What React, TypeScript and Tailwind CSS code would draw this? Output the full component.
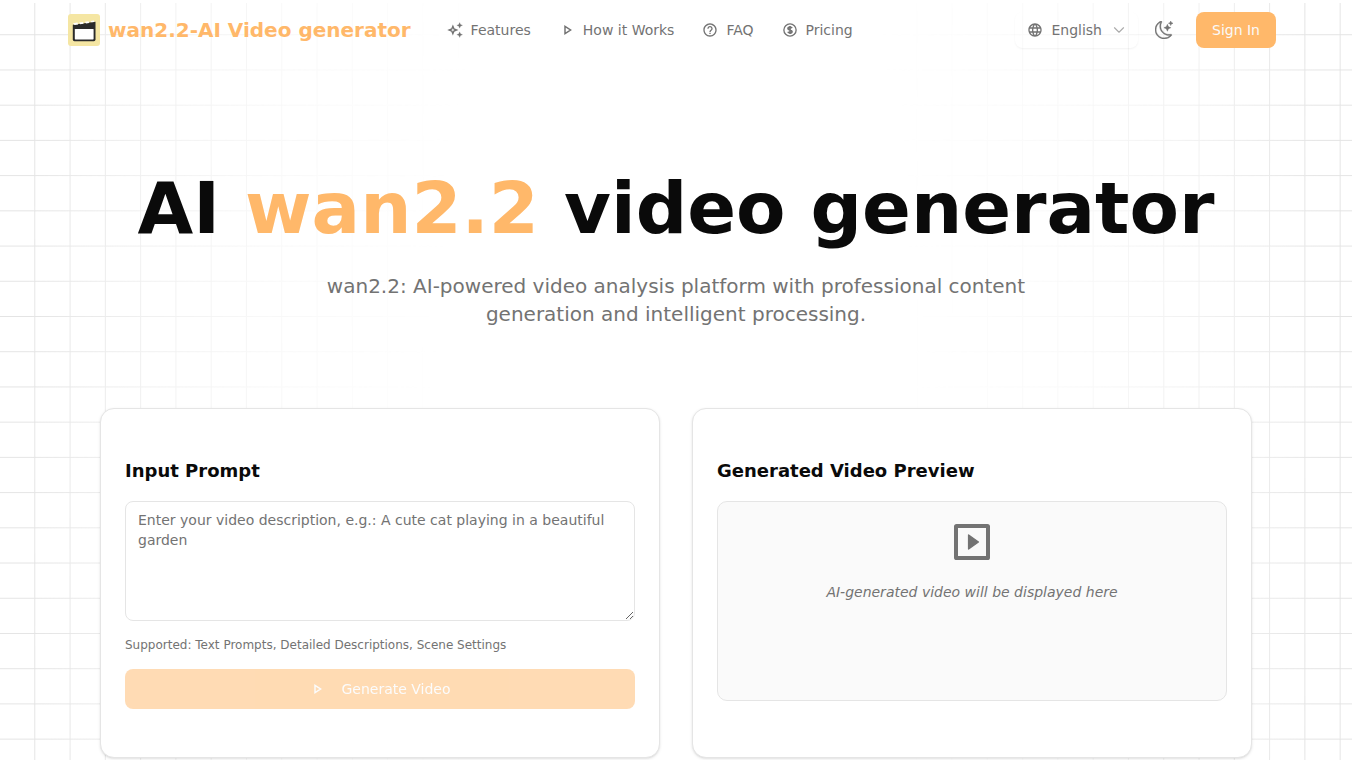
import type { ReactNode } from "react";
import { MdLanguage, MdHelpOutline } from "react-icons/md";
import { BsMoonStars } from "react-icons/bs";
import { ChevronDown } from "lucide-react";

function GridBackdrop() {
  return (
    <svg
      aria-hidden="true"
      className="pointer-events-none absolute inset-0 h-full w-full [mask-image:radial-gradient(ellipse_50%_250%_at_50%_50%,transparent_35%,rgba(0,0,0,0.25)_60%,rgba(0,0,0,0.55)_79%,black_96%)]"
    >
      <defs>
        <pattern id="grid" width="35.28" height="35.22" patternUnits="userSpaceOnUse">
          <path d="M34.78 0V35.22M0 34.72H35.28" fill="none" stroke="#e4e4e4" strokeWidth="1" />
        </pattern>
      </defs>
      <rect y="3" width="100%" height="100%" fill="url(#grid)" />
    </svg>
  );
}

function Logo() {
  return (
    <svg viewBox="0 0 32 32" className="size-8" aria-hidden="true">
      <rect width="32" height="32" rx="3" fill="#f5e6a3" />
      <path
        d="M4.8 10.8 L27.5 7.8 V25.6 a1.6 1.6 0 0 1 -1.6 1.6 H6.4 A1.6 1.6 0 0 1 4.8 25.6 Z"
        fill="#2b2b2b"
      />
      <path
        d="M5 9.2 l4.4 -.6 .8 1.9 -3.6 .6z M11.2 8.4 l3.8 -.5 .6 1.9 -3.4 .4z M17 7.7 l3.6 -.5 .5 1.8 -3.1 .4z M22.6 6.9 l3.4 -.4 .3 1.4 -2.8 .4z"
        fill="#fff"
      />
      <rect x="6.8" y="15" width="18.8" height="10.4" rx=".6" fill="#fff" />
    </svg>
  );
}

function SparkleIcon() {
  return (
    <svg viewBox="0 0 24 24" className="size-4" fill="currentColor" aria-hidden="true">
      <path
        d="M8.8 6.5 L10.4 10.4 14.3 12 10.4 13.6 8.8 17.5 7.2 13.6 3.3 12 7.2 10.4Z"
        fill="none"
        stroke="currentColor"
        strokeWidth="2.2"
        strokeLinejoin="miter"
      />
      <path
        d="M19 .8l1.3 3 3 1.2-3 1.3-1.3 3-1.3-3-3-1.3 3-1.2zM19 14.7l1.3 3 3 1.3-3 1.3-1.3 3-1.3-3-3-1.3 3-1.3z"
        stroke="currentColor"
        strokeWidth=".3"
      />
    </svg>
  );
}

function PlayIcon() {
  return (
    <svg viewBox="0 0 24 24" className="size-4" fill="none" aria-hidden="true">
      <path d="M9 6.6v10.8L17.4 12z" stroke="currentColor" strokeWidth="2.2" />
    </svg>
  );
}

function PriceIcon() {
  return (
    <svg viewBox="0 0 24 24" className="size-4" fill="none" stroke="currentColor" aria-hidden="true">
      <circle cx="12" cy="12" r="9.2" strokeWidth="2" />
      <path
        d="M15 9.2C14.5 8 13.4 7.5 12 7.5c-1.8 0-3 .9-3 2.2 0 1.500 1.300 2 3 2.300 1.800.4 3 .9 3 2.300 0 1.400-1.200 2.200-3 2.200-1.500 0-2.600-.6-3.100-1.900M12 6v12"
        strokeWidth="2.600"
      />
    </svg>
  );
}

function SlideIcon() {
  return (
    <svg viewBox="0 0 24 24" className="size-12" fill="none" stroke="currentColor" aria-hidden="true">
      <rect x="4" y="4" width="16" height="16" rx=".3" strokeWidth="2" strokeLinejoin="round" />
      <path
        d="M10.3 8.5v7l4.9-3.5z"
        fill="currentColor"
        strokeWidth=".7"
        strokeLinejoin="round"
      />
    </svg>
  );
}

const links = [
  { label: "Features", icon: <SparkleIcon /> },
  { label: "How it Works", icon: <PlayIcon /> },
  { label: "FAQ", icon: <MdHelpOutline className="size-4" /> },
  { label: "Pricing", icon: <PriceIcon /> },
];

function Header() {
  return (
    <header className="mx-auto flex h-[60px] w-full max-w-7xl items-center px-8">
      <a href="#" className="flex items-center gap-2 text-xl font-bold text-[#ffb86a]">
        <Logo />
        wan2.2-AI Video generator
      </a>
      <nav className="ml-9 flex items-center gap-7">
        {links.map(({ label, icon }) => (
          <a key={label} href="#" className="flex items-center gap-2 text-sm text-[#737373]">
            {icon}
            {label}
          </a>
        ))}
      </nav>
      <div className="mr-2 ml-auto flex items-center">
        <button
          type="button"
          className="flex h-9 items-center gap-2 rounded-lg pr-2.5 pl-3 text-sm text-[#737373] shadow-xs"
        >
          <MdLanguage className="size-4" />
          English
          <ChevronDown className="size-[18px] opacity-60" strokeWidth={1.5} />
        </button>
        <button
          type="button"
          aria-label="Toggle theme"
          className="mr-3.5 ml-2 flex h-9 w-9 items-center justify-center text-[#737373]"
        >
          <BsMoonStars className="size-[18px]" strokeWidth={0.3} />
        </button>
        <button
          type="button"
          className="h-9 rounded-lg bg-[#ffb86a] px-4 text-sm text-[#fafafa]"
        >
          Sign In
        </button>
      </div>
    </header>
  );
}

function Card({ title, children }: { title: ReactNode; children: ReactNode }) {
  return (
    <section className="rounded-[14px] border border-[#e5e5e5] bg-white px-6 py-12 shadow-sm">
      <h2 className="mb-4 text-lg font-bold">{title}</h2>
      {children}
    </section>
  );
}

export default function App() {
  return (
    <div className="relative min-h-screen overflow-hidden bg-white font-['DejaVu_Sans',sans-serif] text-[#0a0a0a]">
      <GridBackdrop />
      <div className="relative">
        <Header />
        <main className="mx-auto max-w-[1216px] px-8 pt-28">
          <h1 className="text-center text-7xl leading-none font-bold">
            AI <span className="text-[#ffb86a]">wan2.2</span> video generator
          </h1>
          <p className="mx-auto mt-7 max-w-3xl text-center text-xl leading-7 text-[#737373]">
            wan2.2: AI-powered video analysis platform with professional content generation and
            intelligent processing.
          </p>
          <div className="mt-20 grid grid-cols-2 gap-8">
            <Card title={<label htmlFor="prompt">Input Prompt</label>}>
              <textarea
                id="prompt"
                placeholder="Enter your video description, e.g.: A cute cat playing in a beautiful garden"
                className="block h-[120px] w-full resize-y rounded-lg border border-[#e5e5e5] bg-white px-3 py-2 text-sm placeholder:text-[#737373]"
              />
              <p className="my-4 text-xs text-[#737373]">
                Supported: Text Prompts, Detailed Descriptions, Scene Settings
              </p>
              <button
                type="button"
                disabled
                className="flex h-10 w-full items-center justify-center gap-4 rounded-lg bg-[#ffb86a] text-sm text-[#fafafa] opacity-50"
              >
                <PlayIcon />
                Generate Video
              </button>
            </Card>
            <Card title="Generated Video Preview">
              <div className="flex h-[200px] flex-col items-center gap-4 rounded-[10px] border border-[#e5e5e5] bg-[#fafafa] pt-4 text-[#737373]">
                <SlideIcon />
                <p className="text-sm italic">AI-generated video will be displayed here</p>
              </div>
            </Card>
          </div>
        </main>
      </div>
    </div>
  );
}
